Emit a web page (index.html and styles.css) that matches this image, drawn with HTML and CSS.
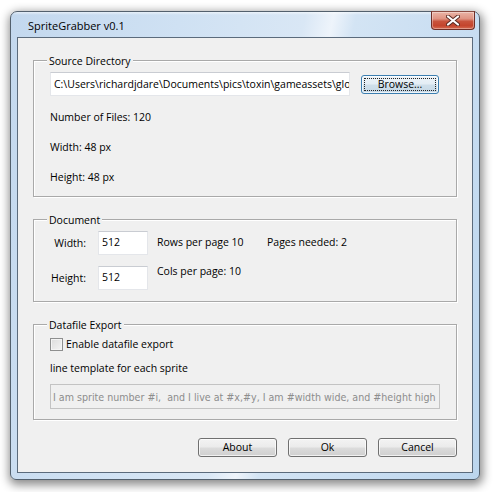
FILE: index.html
```html
<!DOCTYPE html>
<html>
<head>
<meta charset="utf-8">
<title>SpriteGrabber v0.1</title>
<link rel="stylesheet" href="styles.css">
</head>
<body>
<div class="window">
  <div class="titlebar">
    <span class="title">SpriteGrabber v0.1</span>
    <div class="close">
      <svg width="14" height="11" viewBox="0 0 14 11"><path d="M2 1.5 L12 9.5 M12 1.5 L2 9.5" stroke="#5a2a22" stroke-width="4" stroke-linecap="round"/><path d="M2 1.5 L12 9.5 M12 1.5 L2 9.5" stroke="#ffffff" stroke-width="2.2" stroke-linecap="round"/></svg>
    </div>
  </div>
  <div class="client">
    <div class="group g1">
      <div class="gtitle">Source Directory</div>
      <div class="dirrow">
        <div class="textbox dir"><span>C:\Users\richardjdare\Documents\pics\toxin\gameassets\glowing</span></div>
        <div class="btn browse"><span class="focus">Browse...</span></div>
      </div>
      <div class="stat first">Number of Files: 120</div>
      <div class="stat">Width: 48 px</div>
      <div class="stat">Height: 48 px</div>
    </div>

    <div class="group g2">
      <div class="gtitle">Document</div>
      <div class="docgrid">
        <div class="lbl r1">Width:</div>
        <div class="textbox num r1">512</div>
        <div class="info r1 up">Rows per page 10</div>
        <div class="info c4 r1 up">Pages needed: 2</div>
        <div class="lbl r2">Height:</div>
        <div class="textbox num r2">512</div>
        <div class="info r2 down">Cols per page: 10</div>
      </div>
    </div>

    <div class="group g3">
      <div class="gtitle">Datafile Export</div>
      <div class="checkrow"><span class="checkbox"></span><span>Enable datafile export</span></div>
      <div class="tpl-label">line template for each sprite</div>
      <div class="textbox template">I am sprite number #i,&nbsp; and I live at #x,#y, I am #width wide, and #height high</div>
    </div>

    <div class="buttons">
      <div class="btn">About</div>
      <div class="btn">Ok</div>
      <div class="btn">Cancel</div>
    </div>
  </div>
</div>
</body>
</html>
```
FILE: styles.css
```css
html, body {
  margin: 0;
  padding: 0;
  background: #ffffff;
}
body {
  width: 495px;
  height: 492px;
  overflow: hidden;
  font-family: "Open Sans", "Noto Sans", sans-serif;
  font-size: 10.5px;
  color: #000;
}
.window {
  box-sizing: border-box;
  width: 470px;
  height: 469px;
  margin: 11px 0 0 10px;
  padding: 0 6px 6px 6px;
  border: 1px solid #53606d;
  border-radius: 7px 7px 6px 6px;
  background:
    linear-gradient(180deg, rgba(255,255,255,0.55) 0px, rgba(255,255,255,0) 3px),
    linear-gradient(102deg, #c3d8ee 0%, #cfe1f3 30%, #d9e7f5 52%, #eef4fb 57%, #d3e4f4 61%, #c6dcf1 85%, #bcd6ee 100%);
  box-shadow: 1px 3px 10px 2px rgba(0,0,0,0.45);
  display: flex;
  flex-direction: column;
  position: relative;
}
.titlebar {
  height: 25px;
  display: flex;
  align-items: center;
  padding-left: 11px;
}
.title {
  font-size: 11px;
  line-height: 16px;
  margin-top: 2px;
  color: #000;
}
.close {
  position: absolute;
  top: -1px;
  right: 4px;
  width: 42px;
  height: 17px;
  border: 1px solid #6e2e26;
  border-top-color: #8a4a40;
  border-radius: 0 0 4px 4px;
  background: linear-gradient(180deg, #eab4a6 0%, #df9382 40%, #c8533c 55%, #c4452d 80%, #d56a50 100%);
  box-shadow: inset 0 0 0 1px rgba(255,255,255,0.35);
  display: flex;
  align-items: center;
  justify-content: center;
}
.close svg { display: block; }
.client {
  flex: 1;
  border: 1px solid #5b6b7c;
  background: #f0f0f0;
  padding: 22px 15px 15px 15px;
  display: flex;
  flex-direction: column;
}
.group {
  border: 1px solid #a9a9a9;
  box-shadow: inset 1px 1px 0 #fff, 1px 1px 0 #fff;
  padding: 0 16px 11px 16px;
  display: flex;
  flex-direction: column;
  align-items: flex-start;
}
.g2, .g3 { margin-top: 22px; }
.g3 { padding-bottom: 10px; }
.gtitle {
  margin: -8px 0 0 -3px;
  padding: 0 2px;
  line-height: 16px;
  background: #f0f0f0;
}
.dirrow {
  margin-top: 3px;
  display: flex;
  align-items: center;
  gap: 11px;
}
.textbox {
  box-sizing: border-box;
  background: #fff;
  border: 1px solid #e4e6ea;
  border-top-color: #c9ccd2;
  line-height: 16px;
  white-space: nowrap;
  overflow: hidden;
}
.dir {
  width: 300px;
  height: 24px;
  padding: 3px 3px;
}
.btn {
  box-sizing: border-box;
  width: 79px;
  height: 19px;
  border: 1px solid #707070;
  border-radius: 3px;
  background: linear-gradient(180deg, #f3f3f3 0%, #ebebeb 48%, #dcdcdc 52%, #cfcfcf 100%);
  box-shadow: inset 0 0 0 1px rgba(255,255,255,0.7);
  display: flex;
  align-items: center;
  justify-content: center;
  line-height: 15px;
}
.browse {
  width: 78px;
  border-color: #3c7fb1;
  background: linear-gradient(180deg, #eef4f9 0%, #e3edf5 48%, #cfdfea 52%, #c5d8e6 100%);
  padding: 2px;
}
.focus {
  box-sizing: border-box;
  width: 100%;
  height: 100%;
  border: 1px dotted #222;
  display: flex;
  align-items: center;
  justify-content: center;
  line-height: 13px;
}
.stat {
  line-height: 16px;
  margin-top: 14px;
}
.stat.first { margin-top: 13px; }
.docgrid {
  margin-top: 3px;
  display: grid;
  grid-template-columns: 36px 62px 119px auto;
  grid-template-rows: 24px 24px;
  row-gap: 11px;
  align-items: center;
  line-height: 16px;
}
.lbl { grid-column: 1; justify-self: end; white-space: nowrap; }
.r1 { grid-row: 1; }
.r2 { grid-row: 2; }
.num {
  grid-column: 2;
  justify-self: end;
  width: 50px;
  height: 24px;
  padding: 2px 3px;
}
.info {
  grid-column: 3;
  padding-left: 9px;
  white-space: nowrap;
  align-self: start;
}
.info.c4 { grid-column: 4; padding-left: 0; }
.info.up { margin-top: 3px; }
.info.down { margin-top: -3px; }
.checkrow {
  margin-top: 3px;
  display: flex;
  align-items: center;
  gap: 3px;
  line-height: 16px;
}
.checkbox {
  box-sizing: border-box;
  width: 13px;
  height: 13px;
  border: 1px solid #8e8f8f;
  background: linear-gradient(135deg, #dcdcdc 0%, #f4f4f4 100%);
  box-shadow: inset 0 0 0 1px #f4f4f4;
}
.tpl-label {
  margin-top: 8px;
  line-height: 16px;
}
.template {
  margin-top: 8px;
  width: 390px;
  height: 25px;
  padding: 4px 2px;
  background: #f0f0f0;
  border: 1px solid #c3c3c3;
  color: #8d8d8d;
  font-family: "DejaVu Sans Condensed", "DejaVu Sans", sans-serif;
  font-stretch: condensed;
  font-size: 10.6px;
}
.buttons {
  margin-top: 18px;
  display: flex;
  justify-content: flex-end;
  gap: 11px;
}
```
